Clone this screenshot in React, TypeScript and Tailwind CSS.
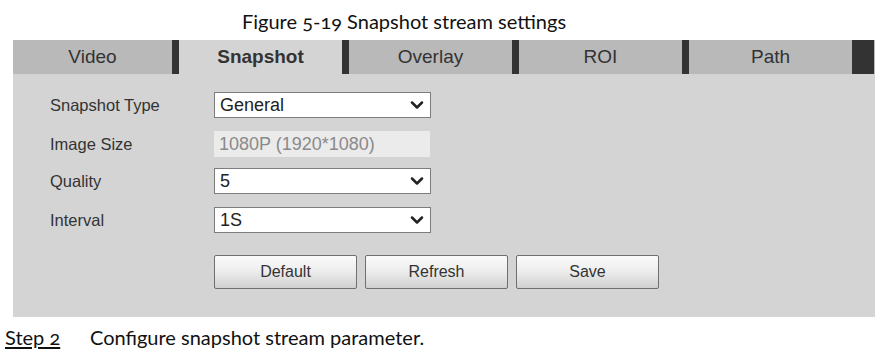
import { ChevronDown } from "lucide-react";

const tabs = ["Video", "Snapshot", "Overlay", "ROI", "Path"];

function Select({ value }: { value: string }) {
  return (
    <div className="flex h-[26px] w-[217px] items-center justify-between border border-[#7d7d7d] bg-white pl-[5px] pr-[3px] text-[18px] text-[#222]">
      <span>{value}</span>
      <ChevronDown className="h-[20px] w-[20px] text-[#222]" strokeWidth={3} />
    </div>
  );
}

function Btn({ label }: { label: string }) {
  return (
    <button className="h-[34px] w-[143px] rounded-[2px] border border-[#6f6f6f] bg-gradient-to-b from-[#fbfbfb] via-[#ececec] to-[#d0d0d0] text-[16px] text-[#333]">
      {label}
    </button>
  );
}

export default function App() {
  const arial = { fontFamily: '"Liberation Sans", Arial, sans-serif' };
  return (
    <div className="h-[357px] w-[890px] bg-white" style={{ fontFamily: 'Lato, "Open Sans", sans-serif' }}>
      {/* Caption */}
      <div className="flex h-[40px] items-center pl-[242px] pt-[2px] text-[20px] text-[#111] oldstyle-nums">
        Figure 5-19 Snapshot stream settings
      </div>

      {/* Panel */}
      <div className="ml-[13px] h-[277px] w-[862px] bg-[#d4d4d4]" style={arial}>
        {/* Tabs */}
        <div className="flex h-[34px] bg-[#b9b9b9]">
          {tabs.map((t, i) => (
            <div key={t} className="flex">
              <div
                className={
                  t === "Snapshot"
                    ? "flex w-[163px] items-center justify-center bg-[#d4d4d4] text-[19px] font-bold text-[#333]"
                    : i === 0
                    ? "flex w-[159px] items-center justify-center text-[19px] text-[#333]"
                    : "flex w-[163px] items-center justify-center text-[19px] text-[#333]"
                }
              >
                {t}
              </div>
              <div className={i === 4 ? "w-[22px] bg-[#333]" : "w-[7px] bg-[#333]"} />
            </div>
          ))}
        </div>

        {/* Form */}
        <div className="flex flex-col pl-[37px] pt-[18px] text-[16.5px] text-[#333]">
          <div className="flex h-[26px] items-center">
            <span className="w-[164px]">Snapshot Type</span>
            <Select value="General" />
          </div>
          <div className="mt-[13px] flex h-[26px] items-center">
            <span className="w-[164px]">Image Size</span>
            <div className="flex h-[26px] w-[216px] items-center bg-[#ebebeb] pl-[5px] text-[18px] text-[#8a8a8a]">
              1080P (1920*1080)
            </div>
          </div>
          <div className="mt-[11px] flex h-[26px] items-center">
            <span className="w-[164px]">Quality</span>
            <Select value="5" />
          </div>
          <div className="mt-[13px] flex h-[26px] items-center">
            <span className="w-[164px]">Interval</span>
            <Select value="1S" />
          </div>
          <div className="ml-[164px] mt-[22px] flex gap-[8px]">
            <Btn label="Default" />
            <Btn label="Refresh" />
            <Btn label="Save" />
          </div>
        </div>
      </div>

      {/* Step */}
      <div className="flex h-[40px] items-center text-[20px] text-[#111]">
        <span className="ml-[5px] w-[85px] underline underline-offset-[2px] oldstyle-nums">Step 2</span>
        <span>Configure snapshot stream parameter.</span>
      </div>
    </div>
  );
}
